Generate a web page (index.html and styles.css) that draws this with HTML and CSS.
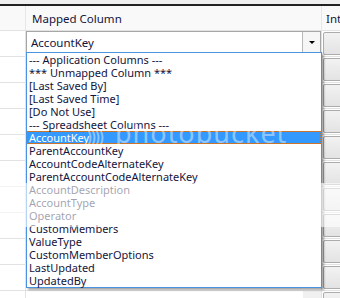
FILE: index.html
```html
<!DOCTYPE html>
<html>
<head>
    <meta charset="UTF-8">
    <title>Column Mapping</title>
    <link rel="stylesheet" href="styles.css">
</head>
<body>
    <div class="topbar"></div>
    <div class="grid">
        <div class="hcell first"></div>
        <div class="hcell mid">Mapped Column</div>
        <div class="hcell last">Int</div>

        <!-- row 1: the open combo -->
        <div class="cell first"></div>
        <div class="cell mid">
            <div class="combo">
                <span class="combo-text">AccountKey</span>
                <span class="combo-btn"><span class="arrow"></span></span>
            </div>
        </div>
        <div class="cell last"><span class="btn"></span></div>

        <div class="cell first"></div><div class="cell mid"><span class="drop"></span></div><div class="cell last"><span class="btn"></span></div>
        <div class="cell first"></div><div class="cell mid"><span class="drop"></span></div><div class="cell last"><span class="btn"></span></div>
        <div class="cell first"></div><div class="cell mid"><span class="drop"></span></div><div class="cell last"><span class="btn"></span></div>
        <div class="cell first"></div><div class="cell mid"><span class="drop"></span></div><div class="cell last"><span class="btn"></span></div>
        <div class="cell first"></div><div class="cell mid"><span class="drop"></span></div><div class="cell last"><span class="btn"></span></div>
        <div class="cell first"></div><div class="cell mid"><span class="drop"></span></div><div class="cell last"><span class="btn"></span></div>
        <div class="cell first"></div><div class="cell mid"><span class="drop"></span></div><div class="cell last"><span class="btn"></span></div>
        <div class="cell first"></div><div class="cell mid"><span class="drop"></span></div><div class="cell last"><span class="btn"></span></div>
        <div class="cell first"></div><div class="cell mid"><span class="drop"></span></div><div class="cell last"><span class="btn"></span></div>
        <div class="cell first short"></div><div class="cell mid short"><span class="drop"></span></div><div class="cell last short"><span class="btn"></span></div>
    </div>

    <!-- open dropdown list -->
    <ul class="list">
        <li>--- Application Columns ---</li>
        <li>*** Unmapped Column ***</li>
        <li>[Last Saved By]</li>
        <li>[Last Saved Time]</li>
        <li>[Do Not Use]</li>
        <li>--- Spreadsheet Columns ---</li>
        <li class="selected">AccountKey</li>
        <li>ParentAccountKey</li>
        <li>AccountCodeAlternateKey</li>
        <li>ParentAccountCodeAlternateKey</li>
        <li>AccountDescription</li>
        <li>AccountType</li>
        <li>Operator</li>
        <li>CustomMembers</li>
        <li>ValueType</li>
        <li>CustomMemberOptions</li>
        <li>LastUpdated</li>
        <li>UpdatedBy</li>
    </ul>

    <!-- image host watermark -->
    <div class="mark"><span class="mark-logo">))))</span>photobucket</div>
    <div class="banner"></div>
</body>
</html>
```

FILE: styles.css
```css
body {
    margin: 0;
    background-color: #f0f0f0;
    font-family: "Noto Sans", "Open Sans", sans-serif;
    font-size: 11px;
    color: #14143c;
    width: 340px;
    height: 298px;
    overflow: hidden;
    position: relative;
}
.topbar {
    height: 4px;
    border-bottom: 2px solid #222;
}
.grid {
    display: grid;
    grid-template-columns: 26px 296px 18px;
    grid-template-rows: 25px repeat(10, 26px) 7px;
}
.hcell {
    background-color: #f9f9f9;
    border-bottom: 1px solid #e2e2e2;
    box-sizing: border-box;
    display: flex;
    align-items: center;
    white-space: nowrap;
    overflow: hidden;
    font-size: 11.5px;
}
.hcell.first {
    border-right: 1px solid #e3e8ee;
}
.hcell.mid {
    padding-left: 6px;
    border-right: 1px solid #e3e8ee;
}
.hcell.last {
    padding-left: 4px;
    padding-top: 1px;
}
.cell {
    background-color: #fff;
    border-bottom: 1px solid #e2e2e2;
    box-sizing: border-box;
    overflow: hidden;
}
.cell.short {
    border-bottom: none;
}
.cell.first {
    border-right: 1px solid #e2e2e2;
}
.cell.mid {
    display: flex;
    justify-content: flex-end;
    border-right: 1px solid #e2e2e2;
}
.cell.last {
    padding: 1px 0 0 1px;
}
.drop {
    width: 18px;
    height: 22px;
    background-color: #f0f0f0;
}
.combo {
    width: 295px;
    height: 22px;
    box-sizing: border-box;
    border: 1px solid #a6a6a6;
    background-color: #fff;
    display: flex;
    align-items: center;
}
.combo-text {
    flex: 1;
    padding-left: 4px;
    font-size: 11.5px;
}
.combo-btn {
    width: 18px;
    height: 20px;
    box-sizing: border-box;
    border-left: 1px solid #b8b8b8;
    background-color: #f6f6f6;
    display: flex;
    align-items: center;
    justify-content: center;
}
.arrow {
    width: 0;
    height: 0;
    border-left: 3px solid transparent;
    border-right: 3px solid transparent;
    border-top: 3px solid #000;
}
.btn {
    display: block;
    width: 24px;
    height: 23px;
    box-sizing: border-box;
    border: 1px solid #acacac;
    border-radius: 2px;
    background: linear-gradient(#f2f2f2, #e3e3e3);
}
.list {
    position: absolute;
    left: 26px;
    top: 52px;
    width: 296px;
    margin: 0;
    padding: 0;
    list-style: none;
    box-sizing: border-box;
    border: 1px solid #4a93e0;
    background-color: #fff;
    box-shadow: 2px 2px 2px rgba(0, 0, 0, 0.35);
}
.list li {
    height: 13px;
    line-height: 13px;
    padding-left: 2px;
    white-space: nowrap;
    box-sizing: border-box;
}
.list li.selected {
    background-color: #3399ff;
    color: #fff;
    border: 1px dotted #c8742a;
    padding-left: 1px;
    line-height: 11px;
}
.mark {
    position: absolute;
    left: 86px;
    top: 116px;
    font-family: "Noto Sans", sans-serif;
    font-size: 27px;
    line-height: 34px;
    letter-spacing: 1px;
    color: rgba(255, 255, 255, 0.45);
    white-space: nowrap;
}
.mark-logo {
    font-size: 20px;
    margin-right: 13px;
    letter-spacing: -2px;
}
.banner {
    position: absolute;
    left: 0;
    top: 183px;
    width: 340px;
    height: 44px;
    background-color: rgba(255, 255, 255, 0.6);
}
```
